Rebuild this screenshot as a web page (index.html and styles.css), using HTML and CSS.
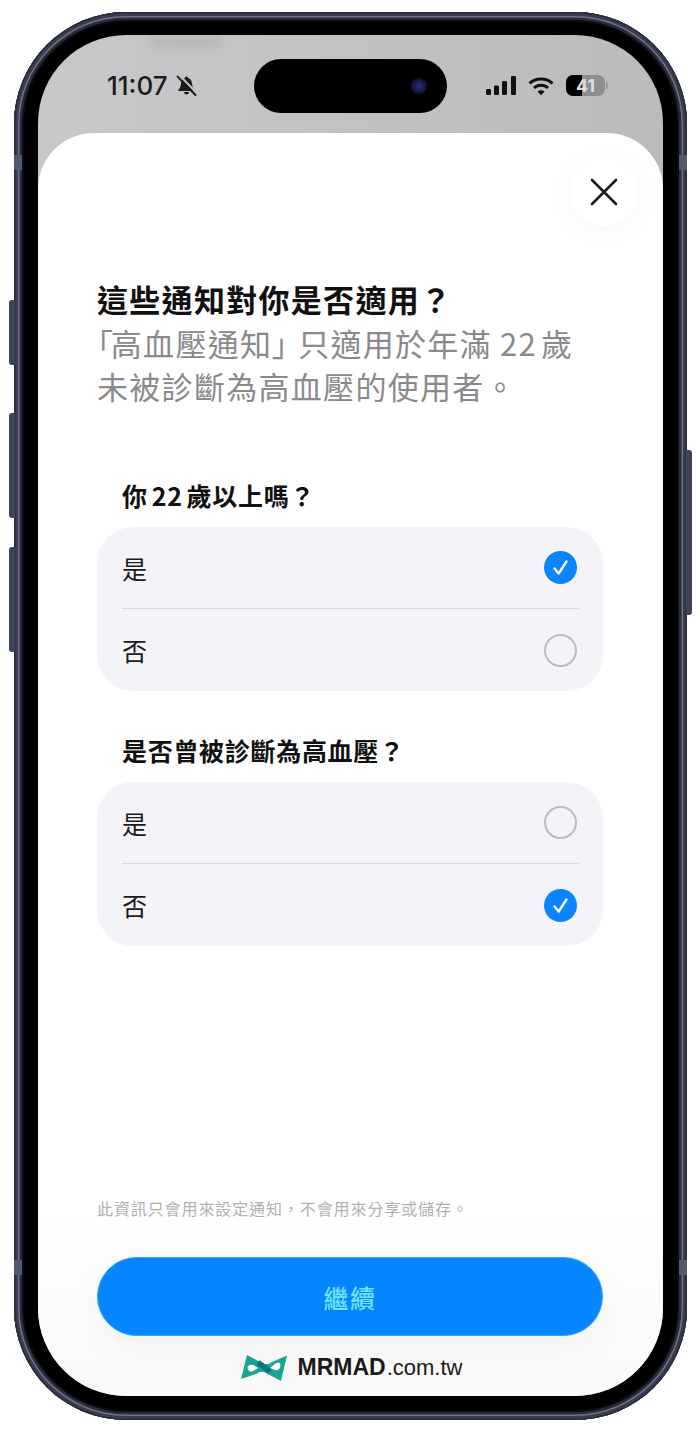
FILE: index.html
```html
<!DOCTYPE html>
<html lang="zh-Hant">
<head>
  <meta charset="utf-8">
  <title>高血壓通知</title>
  <link rel="stylesheet" href="styles.css">
</head>
<body>
  <div class="phone">
    <span class="side-btn btn-action"></span>
    <span class="side-btn btn-up"></span>
    <span class="side-btn btn-down"></span>
    <span class="side-btn btn-power"></span>
    <span class="seam seam-tl"></span>
    <span class="seam seam-tr"></span>
    <span class="seam seam-bl"></span>
    <span class="seam seam-br"></span>

    <div class="screen">
      <div class="status-bar">
        <div class="status-left">
          <span class="time">11:07</span>
          <svg class="bell" viewBox="0 0 20 20" width="21" height="21">
            <path d="M10 1.500c-.8 0-1.200.5-1.300 1.100C6 3.400 5 5.700 4.700 8.500 4.400 11.300 3.500 12.700 2.300 14c-.4.500-.1 1.200.5 1.200h14.400c.6 0 .9-.7.5-1.200-1.200-1.300-2.100-2.700-2.400-5.500C15 5.700 14 3.400 11.300 2.600 11.200 2 10.800 1.500 10 1.500z" fill="#1c1c1e"/>
            <path d="M7.500 16.300h5c-.2 1.300-1.200 2.200-2.500 2.200s-2.300-.9-2.500-2.200z" fill="#1c1c1e"/>
            <path d="M3.500 .5 20 17.500" stroke="#c2c2c4" stroke-width="2"/>
            <path d="M1.500 1.500 18.500 19" stroke="#1c1c1e" stroke-width="1.900" stroke-linecap="round"/>
          </svg>
        </div>
        <div class="island"><span class="lens"></span></div>
        <div class="status-right">
          <svg viewBox="0 0 30 20" width="30" height="20">
            <rect x="0" y="13" width="5" height="6" rx="1.200" fill="#111"/>
            <rect x="8" y="9.500" width="5" height="9.500" rx="1.200" fill="#111"/>
            <rect x="16" y="5" width="5" height="14" rx="1.200" fill="#111"/>
            <rect x="25" y="0" width="5" height="19" rx="1.200" fill="#111"/>
          </svg>
          <svg viewBox="0 0 26 20" width="26" height="20">
            <path d="M1.500 7.500C7.500 1.500 18.500 1.500 24.500 7.500" fill="none" stroke="#111" stroke-width="3"/>
            <path d="M6 12C10 8.300 16 8.300 20 12" fill="none" stroke="#111" stroke-width="3"/>
            <path d="M9.500 15.500 13 19.200 16.500 15.500C14.500 13.800 11.500 13.800 9.500 15.500z" fill="#111"/>
          </svg>
          <div class="battery">
            <span class="battery-fill"></span>
            <span class="battery-num">41</span>
            <span class="battery-nub"></span>
          </div>
        </div>
      </div>

      <div class="sheet">
        <button class="close-btn" aria-label="關閉">
          <svg viewBox="0 0 28 28" width="28" height="28">
            <path d="M2 2 26 26M26 2 2 26" stroke="#1c1c1e" stroke-width="2.600" stroke-linecap="round"/>
          </svg>
        </button>

        <h1 class="title">這些通知對你是否適用？</h1>
        <p class="subtitle"><span class="bracket open">「</span>高血壓通知<span class="bracket">」</span><span class="gap"></span>只適用於年滿<span class="num">22</span>歲<br>未被診斷為高血壓的使用者。</p>

        <h2 class="question first">你<span class="num">22</span>歲以上嗎？</h2>
        <div class="card">
          <div class="row">
            <span>是</span>
            <span class="check on">
              <svg viewBox="0 0 33 33" width="33" height="33"><path d="M10.500 17.500 14.700 22.500 22.500 10.500" fill="none" stroke="#fff" stroke-width="2.300" stroke-linecap="round" stroke-linejoin="round"/></svg>
            </span>
          </div>
          <div class="row">
            <span>否</span>
            <span class="check"></span>
          </div>
        </div>

        <h2 class="question">是否曾被診斷為高血壓？</h2>
        <div class="card">
          <div class="row">
            <span>是</span>
            <span class="check"></span>
          </div>
          <div class="row">
            <span>否</span>
            <span class="check on">
              <svg viewBox="0 0 33 33" width="33" height="33"><path d="M10.500 17.500 14.700 22.500 22.500 10.500" fill="none" stroke="#fff" stroke-width="2.300" stroke-linecap="round" stroke-linejoin="round"/></svg>
            </span>
          </div>
        </div>

        <p class="note">此資訊只會用來設定通知，不會用來分享或儲存。</p>
        <button class="continue">繼續</button>

        <div class="brand">
          <svg viewBox="5 3 50 30" width="50" height="30">
            <path d="M13 5 28 13Q33 16 38 12L53 5.500 47 31 32 23Q27 20 22 24L7 29z" fill="#1ba394"/>
            <path d="M13.500 17Q16 13 21 16L24 18 19 21Q14 23 13.500 17z" fill="#fff"/>
            <path d="M46.500 15Q46 21 41 20L36 18 41 14Q46 11 46.500 15z" fill="#fff"/>
            <path d="M24 12.500 36 21.500" stroke="#0f7480" stroke-width="5.500"/>
          </svg>
          <span class="brand-name">MRMAD<span class="brand-domain">.com.tw</span></span>
        </div>
      </div>
    </div>
  </div>
</body>
</html>
```

FILE: styles.css
```css
* {
  box-sizing: border-box;
}

html, body {
  margin: 0;
  background-color: #fff;
}

body {
  width: 700px;
  height: 1432px;
  overflow: hidden;
  padding: 12px 0 0 14px;
  font-family: "Noto Sans CJK TC", "Noto Sans", sans-serif;
}

/* phone body */
.phone {
  position: relative;
  width: 673px;
  height: 1408px;
  padding: 23px 24px 24px;
  border-radius: 112px;
  background: #000;
  box-shadow: inset 0 0 0 1.500px #2a2c3c, inset 0 0 0 4px #3a3d50, inset 0 0 0 5.500px #6f7388, inset 0 0 0 8px #2a2c3c, inset 0 0 0 10px #0b0b10;
}

.side-btn {
  position: absolute;
  width: 6px;
  background-color: #3f435a;
}

.btn-action {
  left: -5px;
  top: 288px;
  height: 65px;
  border-radius: 3px 0 0 3px;
}

.btn-up {
  left: -5px;
  top: 401px;
  height: 105px;
  border-radius: 3px 0 0 3px;
}

.btn-down {
  left: -5px;
  top: 535px;
  height: 105px;
  border-radius: 3px 0 0 3px;
}

.btn-power {
  right: -5px;
  top: 438px;
  height: 165px;
  border-radius: 0 3px 3px 0;
}

/* antenna lines on the band */
.seam {
  position: absolute;
  width: 8px;
  height: 15px;
  background-color: #555970;
}

.seam-tl {
  left: 0;
  top: 143px;
}

.seam-tr {
  right: 0;
  top: 143px;
}

.seam-bl {
  left: 0;
  top: 1248px;
}

.seam-br {
  right: 0;
  top: 1248px;
}

.screen {
  display: flex;
  flex-direction: column;
  height: 100%;
  overflow: hidden;
  border-radius: 88px;
  background: linear-gradient(90deg, #c8c8ca, #bbbbbe);
}

/* status bar */
.status-bar {
  position: relative;
  display: flex;
  justify-content: space-between;
  align-items: center;
  height: 98px;
  flex-shrink: 0;
  padding: 3px 56px 0 69px;
}

/* blurred page behind the sheet */
.status-bar::before {
  content: "";
  position: absolute;
  left: 112px;
  top: 2px;
  width: 70px;
  height: 10px;
  background-color: #b4b4b6;
  filter: blur(4px);
}

.status-left {
  position: relative;
  display: flex;
  align-items: center;
  gap: 8px;
}

.time {
  font-family: Inter, sans-serif;
  font-size: 26px;
  font-weight: 500;
  color: #1c1c1e;
}

.island {
  position: absolute;
  left: 216px;
  top: 24px;
  width: 193px;
  height: 54px;
  border-radius: 27px;
  background-color: #000;
}

.lens {
  position: absolute;
  right: 20px;
  top: 19px;
  width: 16px;
  height: 16px;
  border-radius: 50%;
  background: radial-gradient(circle, #2b2b80 0%, #15153a 60%, #050510 100%);
}

.status-right {
  display: flex;
  align-items: center;
  gap: 12px;
}

.battery {
  position: relative;
  display: flex;
  align-items: center;
  justify-content: center;
  width: 39px;
  height: 21px;
  margin-right: 2px;
  border-radius: 7px;
  background-color: #8e8e90;
}

.battery-fill {
  position: absolute;
  left: 0;
  top: 0;
  bottom: 0;
  width: 16px;
  border-radius: 7px 0 0 7px;
  background-color: #000;
}

.battery-num {
  position: relative;
  font-family: Inter, sans-serif;
  font-size: 18px;
  font-weight: 700;
  color: #dcdcdc;
}

.battery-nub {
  position: absolute;
  right: -3px;
  top: 7px;
  width: 2px;
  height: 7px;
  border-radius: 0 2px 2px 0;
  background-color: #9a9a9c;
}

/* sheet */
.sheet {
  position: relative;
  display: flex;
  flex-direction: column;
  flex: 1;
  padding: 144px 60px 0 59px;
  border-radius: 56px 56px 0 0;
  background: linear-gradient(#fff 85%, #f9f9f9 100%);
}

.close-btn {
  position: absolute;
  right: 25px;
  top: 25px;
  display: flex;
  align-items: center;
  justify-content: center;
  width: 68px;
  height: 68px;
  padding: 0;
  border: none;
  border-radius: 50%;
  background-color: #fff;
  box-shadow: 0 4px 30px rgba(0, 0, 0, 0.04);
}

.title {
  margin: 0;
  font-size: 31px;
  font-weight: 700;
  line-height: 44px;
  letter-spacing: 1.300px;
  color: #111;
  white-space: nowrap;
}

.subtitle {
  margin: 0;
  font-size: 31px;
  font-weight: 400;
  line-height: 43px;
  letter-spacing: 1.300px;
  color: #8a8a8c;
  white-space: nowrap;
}

.bracket {
  font-feature-settings: "palt";
}

.bracket.open {
  letter-spacing: -1.700px;
}

.gap {
  display: inline-block;
  width: 9px;
}

.num {
  margin: 0 4px;
}

.subtitle .num {
  margin-left: 8px;
}

.question {
  margin: 41px 0 14px 25px;
  font-size: 25px;
  font-weight: 700;
  line-height: 36px;
  letter-spacing: 0.700px;
  color: #111;
  white-space: nowrap;
}

.question.first {
  margin-top: 70px;
}

.card {
  padding: 0 24px 0 25px;
  border-radius: 36px;
  background-color: #f4f4f8;
}

.row {
  display: flex;
  justify-content: space-between;
  align-items: center;
  height: 81px;
  padding-right: 2px;
  font-size: 25px;
  color: #1c1c1e;
}

.row + .row {
  height: 83px;
  border-top: 1.500px solid #dadade;
}

.check {
  width: 33px;
  height: 33px;
  border: 2px solid #bcbcc0;
  border-radius: 50%;
}

.check.on {
  border: none;
  background-color: #0a84ff;
}

.check svg {
  display: block;
}

.note {
  margin: auto 0 0 0;
  font-size: 16px;
  line-height: 22px;
  letter-spacing: 0.900px;
  color: #b0b0b4;
  white-space: nowrap;
}

.continue {
  height: 79px;
  margin-top: 38px;
  flex-shrink: 0;
  border: 1px solid #2aa8ff;
  border-radius: 40px;
  background-color: #0585ff;
  font-family: inherit;
  font-size: 25px;
  font-weight: 500;
  letter-spacing: 1.500px;
  color: #6fe3ff;
  box-shadow: 0 12px 40px rgba(0, 0, 0, 0.04);
}

.brand {
  display: flex;
  justify-content: center;
  align-items: center;
  gap: 9px;
  height: 60px;
  flex-shrink: 0;
  padding: 3px 0 0 1px;
}

.brand-name {
  font-family: "Liberation Sans", Arial, sans-serif;
  font-size: 23px;
  font-weight: 700;
  color: #1a1a1a;
}

.brand-domain {
  margin-left: 1px;
  font-size: 22px;
  font-weight: 400;
}
```
